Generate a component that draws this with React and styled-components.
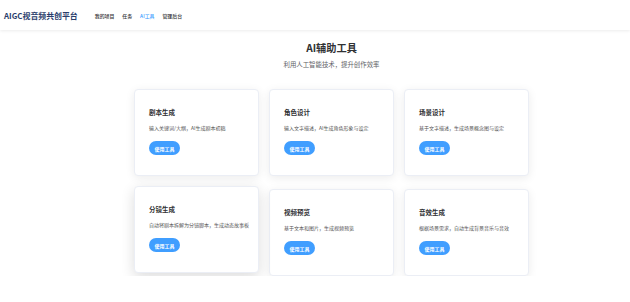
import React from 'react'
import styled, { createGlobalStyle } from 'styled-components'

const Global = createGlobalStyle`
  html, body {
    margin: 0;
    padding: 0;
    background: #fff;
    font-family: "Noto Sans CJK SC", "Noto Sans", "Liberation Sans", sans-serif;
  }
  * { box-sizing: border-box; }
`

const Header = styled.header`
  height: 30px;
  display: flex;
  align-items: center;
  padding: 0 4px;
  background: #fff;
  box-shadow: 0 1px 3px rgba(0, 0, 0, 0.08);
`

const Logo = styled.div`
  font-size: 7.9px;
  font-weight: 700;
  color: #2a3d6c;
  margin-right: 17px;
  white-space: nowrap;
`

const Nav = styled.nav`
  display: flex;
  align-items: center;
  gap: 8px;
`

const NavItem = styled.span`
  font-size: 4.9px;
  font-weight: 500;
  color: ${p => (p.$active ? '#409eff' : '#303133')};
  white-space: nowrap;
`

const Main = styled.main`
  padding-left: 134px;
  width: 529px;
`

const Heading = styled.div`
  text-align: center;
  padding-top: 11px;
`

const Title = styled.h1`
  margin: 0;
  font-size: 10.2px;
  line-height: 14px;
  font-weight: 700;
  color: #303133;
`

const Subtitle = styled.p`
  margin: 5px 0 0;
  font-size: 6.4px;
  line-height: 9px;
  color: #606266;
`

const Grid = styled.div`
  display: grid;
  grid-template-columns: repeat(3, 125px);
  column-gap: 10px;
  row-gap: 13px;
  margin-top: 20px;
`

const Card = styled.div`
  height: 87px;
  padding: 18px 14px 0;
  background: #fff;
  border: 1px solid #ebeef5;
  border-radius: 4px;
  box-shadow: ${p => (p.$hover ? '0 4px 14px rgba(0,0,0,0.14)' : '0 2px 10px rgba(0,0,0,0.08)')};
  transform: ${p => (p.$hover ? 'translateY(-3px)' : 'none')};
`

const CardTitle = styled.h3`
  margin: 0;
  font-size: 6.5px;
  line-height: 9px;
  font-weight: 700;
  color: #303133;
`

const CardDesc = styled.p`
  margin: 7px 0 0;
  font-size: 5px;
  line-height: 7px;
  color: #555;
  white-space: nowrap;
`

const Button = styled.button`
  margin-top: 10px;
  height: 14px;
  padding: 0 5.5px;
  border: 0;
  border-radius: 7px;
  background: #409eff;
  color: #fff;
  font-family: inherit;
  font-size: 5px;
  font-weight: 700;
  cursor: pointer;
`

const tools = [
  { title: '剧本生成', desc: '输入关键词/大纲，AI生成剧本初稿' },
  { title: '角色设计', desc: '输入文字描述，AI生成角色形象与设定' },
  { title: '场景设计', desc: '基于文字描述，生成场景概念图与设定' },
  { title: '分镜生成', desc: '自动将剧本拆解为分镜脚本，生成动态故事板', hover: true },
  { title: '视频预览', desc: '基于文本和图片，生成视频预览' },
  { title: '音效生成', desc: '根据场景需求，自动生成背景音乐与音效' }
]

export default function App() {
  return (
    <div>
      <Global />
      <Header>
        <Logo>AIGC视音频共创平台</Logo>
        <Nav>
          <NavItem>我的项目</NavItem>
          <NavItem>任务</NavItem>
          <NavItem $active>AI工具</NavItem>
          <NavItem>管理后台</NavItem>
        </Nav>
      </Header>
      <Main>
        <Heading>
          <Title>AI辅助工具</Title>
          <Subtitle>利用人工智能技术，提升创作效率</Subtitle>
        </Heading>
        <Grid>
          {tools.map(t => (
            <Card key={t.title} $hover={t.hover}>
              <CardTitle>{t.title}</CardTitle>
              <CardDesc>{t.desc}</CardDesc>
              <Button>使用工具</Button>
            </Card>
          ))}
        </Grid>
      </Main>
    </div>
  )
}
